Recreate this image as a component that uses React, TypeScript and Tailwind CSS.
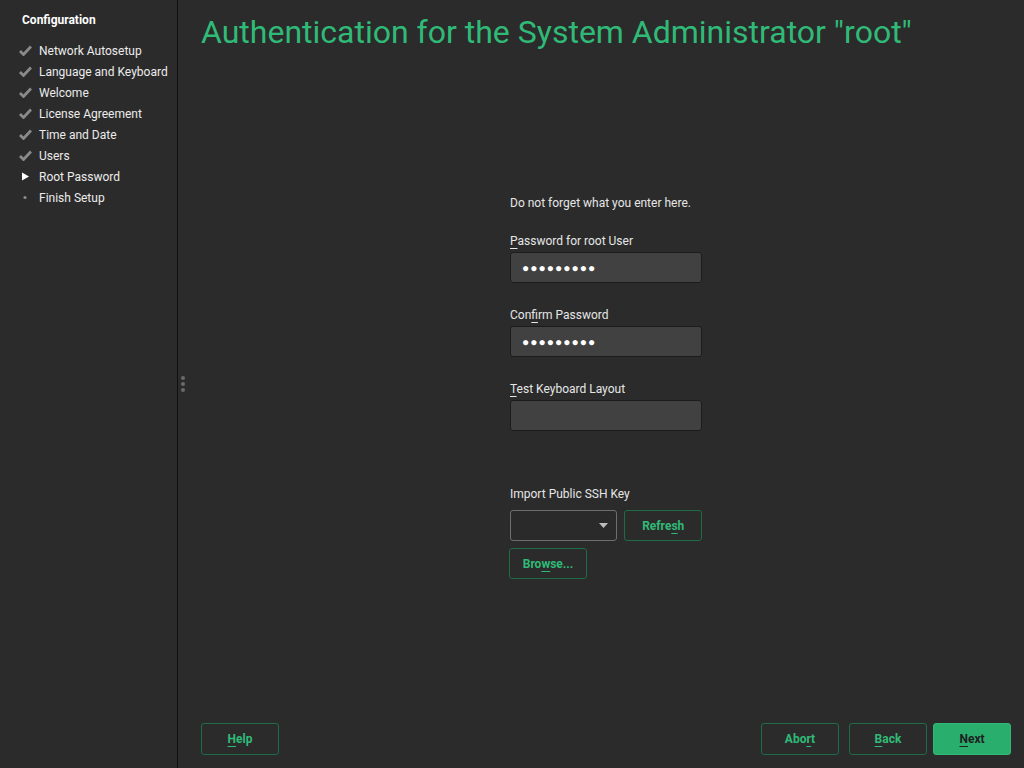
import React from 'react'

const green = '#30ba78'

const steps = [
  { label: 'Network Autosetup', state: 'done' },
  { label: 'Language and Keyboard', state: 'done' },
  { label: 'Welcome', state: 'done' },
  { label: 'License Agreement', state: 'done' },
  { label: 'Time and Date', state: 'done' },
  { label: 'Users', state: 'done' },
  { label: 'Root Password', state: 'current' },
  { label: 'Finish Setup', state: 'todo' },
]

const StepIcon = ({ state }: { state: string }) => {
  if (state === 'done')
    return (
      <svg width="13" height="11" viewBox="0 0 13 11">
        <path d="M1 6 L4.5 9.5 L12 1.5" stroke="#8a8a8a" strokeWidth="2.8" fill="none" />
      </svg>
    )
  if (state === 'current')
    return (
      <svg width="13" height="11" viewBox="0 0 13 11">
        <path d="M3 1.5 L10 5.5 L3 9.5 Z" fill="#ffffff" />
      </svg>
    )
  return (
    <svg width="13" height="11" viewBox="0 0 13 11">
      <circle cx="6" cy="5.5" r="1.6" fill="#8c8c8c" />
    </svg>
  )
}

// underlined mnemonic letter
const U = ({ children }: { children: React.ReactNode }) => (
  <span className="underline underline-offset-[3px]">{children}</span>
)

const Btn = ({ children, primary, small }: { children: React.ReactNode; primary?: boolean; small?: boolean }) => (
  <button
    className={`${small ? 'h-[31px]' : 'h-[32px]'} w-[78px] rounded-[3px] border text-[12px] font-bold ${
      primary ? 'border-[#30ba78] bg-[#2aae6e] text-[#1f1f1f]' : 'border-[#1e6b47] text-[#30ba78]'
    }`}
  >
    {children}
  </button>
)

const Field = ({ label, dots }: { label: React.ReactNode; dots?: boolean }) => (
  <div className="flex flex-col">
    <div className="text-[12px] text-[#e6e6e6] leading-[14px]">{label}</div>
    <div className="mt-[4px] flex h-[31px] w-[192px] items-center rounded-[3px] border border-[#1c1c1c] bg-[#414141] px-[11px] text-[12px] tracking-[1px] text-white">
      {dots ? '●●●●●●●●●' : ''}
    </div>
  </div>
)

export default function App() {
  return (
    <div
      className="flex h-[768px] w-[1024px] bg-[#2b2b2b] text-[#e6e6e6]"
      style={{ fontFamily: 'Roboto, "Liberation Sans", sans-serif' }}
    >
      <aside className="w-[178px] shrink-0 border-r border-[#0f0f0f] pt-[13px]">
        <div className="pl-[22px] text-[12px] font-bold leading-[15px] text-white">Configuration</div>
        <ul className="mt-[12px] flex flex-col">
          {steps.map((s) => (
            <li key={s.label} className="flex h-[21px] items-center pl-[19px] text-[12px]">
              <span className="flex w-[20px]">
                <StepIcon state={s.state} />
              </span>
              <span className="text-[#ececec]">{s.label}</span>
            </li>
          ))}
        </ul>
      </aside>

      <div className="relative flex flex-1 flex-col">
        <div className="absolute left-[3px] top-[376px] flex flex-col gap-[2px]">
          <span className="h-[4px] w-[4px] rounded-full bg-[#6a6a6a]" />
          <span className="h-[4px] w-[4px] rounded-full bg-[#6a6a6a]" />
          <span className="h-[4px] w-[4px] rounded-full bg-[#6a6a6a]" />
        </div>

        <h1 className="pl-[23px] pt-[12px] text-[32px] leading-[40px]" style={{ color: green }}>
          Authentication for the System Administrator "root"
        </h1>

        <div className="flex flex-1 justify-center pl-[10px]">
          <div className="mt-[144px] flex w-[192px] flex-col">
            <p className="text-[12px] leading-[14px]">Do not forget what you enter here.</p>
            <div className="mt-[24px] flex flex-col gap-[25px]">
              <Field label={<><U>P</U>assword for root User</>} dots />
              <Field label={<>Con<U>f</U>irm Password</>} dots />
              <Field label={<><U>T</U>est Keyboard Layout</>} />
            </div>

            <div className="mt-[56px] text-[12px] leading-[14px]">Import Public SSH Key</div>
            <div className="mt-[9px] flex gap-[7px]">
              <div className="flex h-[31px] w-[108px] items-center justify-end rounded-[3px] border border-[#6e6e6e] bg-[#2a2a2a] pr-[8px]">
                <svg width="9" height="5" viewBox="0 0 9 5">
                  <path d="M0 0 L9 0 L4.5 5 Z" fill="#bdbdbd" />
                </svg>
              </div>
              <Btn small>
                Refre<U>s</U>h
              </Btn>
            </div>
            <div className="-ml-[1px] mt-[7px]">
              <Btn small>
                Bro<U>w</U>se...
              </Btn>
            </div>
          </div>
        </div>

        <div className="flex items-center pl-[23px] pb-[13px]">
          <Btn>
            <U>H</U>elp
          </Btn>
          <div className="flex-1" />
          <div className="flex gap-[10px]">
            <Btn>
              Abo<U>r</U>t
            </Btn>
            <Btn>
              <U>B</U>ack
            </Btn>
          </div>
          <div className="ml-[6px] mr-[13px]">
            <Btn primary>
              <U>N</U>ext
            </Btn>
          </div>
        </div>
      </div>
    </div>
  )
}
